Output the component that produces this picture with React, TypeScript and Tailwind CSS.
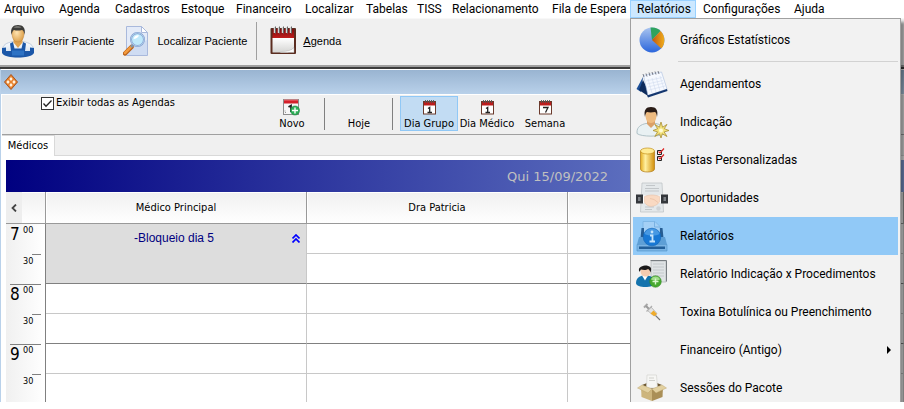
import type { ReactNode } from "react";

const UI = "font-[Roboto,'Open_Sans',sans-serif]";
const TAHOMA = "font-['DejaVu_Sans_Condensed','DejaVu_Sans',sans-serif]";
const ARIAL = "font-['Liberation_Sans',Arial,sans-serif]";

function PatientIcon() {
  return (
    <svg width="34" height="34" viewBox="0 0 34 34">
      <defs>
        <radialGradient id="skin" cx=".4" cy=".4" r=".7"><stop offset="0" stopColor="#ffe3b0" /><stop offset="1" stopColor="#d9983f" /></radialGradient>
        <linearGradient id="shirt" x1="0" y1="0" x2="0" y2="1"><stop offset="0" stopColor="#fff" /><stop offset="1" stopColor="#c3d5ea" /></linearGradient>
      </defs>
      <path d="M1.500 26C1.500 21 5 19 12 17.500h10c7 1.500 10.500 3.500 10.500 8.500v2c0 3-8 5-15.500 5S1.500 31 1.500 28z" fill="url(#shirt)" stroke="#9fb4cf" strokeWidth=".6" />
      <path d="M12.500 14h9v4.500L17 24l-4.500-5.500z" fill="#e0a351" />
      <path d="M1 24l4-.5V27h5l-1-7.500 3-1.500 1.500 6.500h7L22 18l3 1.500-1 7.500h5v-3.500l4 .5v5c-2 3.500-9 4.500-16 4.500S3 32.500 1 29z" fill="#1b57a8" />
      <path d="M11 26.500h12v5H11z" fill="#2d72c4" />
      <path d="M11 9.500c0-5 2-7 6-7s6 2 6 7c0 5-2.500 8.500-6 8.500s-6-3.500-6-8.500z" fill="url(#skin)" stroke="#b67a2f" strokeWidth=".4" />
      <path d="M10.500 11C9 4 12 1 17 1s8 3 6.500 10c-.5-3-1-4.500-2.500-5-3 .8-6 .6-8 0-1.500 1-2 2.500-2.500 5z" fill="#3c3c3a" />
      <path d="M12.500 3.500c2-2 6-2 8 0-2 .8-6 .8-8 0z" fill="#70706c" />
    </svg>
  );
}

function SearchDocIcon() {
  return (
    <svg width="27" height="32" viewBox="0 0 27 32">
      <path d="M3.500 1.500h15l6 6v23h-21z" fill="#e4ebf8" stroke="#a9b9dc" />
      <path d="M4 23l20-8v15H4z" fill="#cfdcf2" />
      <path d="M18.500 1.500v6h6z" fill="#fff" stroke="#a9b9dc" />
      <path d="M2 28.500l6.500-6.500" stroke="#b8611b" strokeWidth="4.500" strokeLinecap="round" />
      <path d="M2 28l6-6" stroke="#f39a3c" strokeWidth="2.500" strokeLinecap="round" />
      <path d="M8 22l3-3" stroke="#8595a6" strokeWidth="2.500" />
      <circle cx="14.500" cy="14.500" r="6.500" fill="#bfe9fb" stroke="#7c9fcf" strokeWidth="2" />
      <circle cx="14.500" cy="14.500" r="6.500" fill="none" stroke="#c6d8f0" strokeWidth=".7" />
      <path d="M10.500 14c.5-3 3-4.500 5.500-3.500-1 2-3 3.500-5.500 3.500z" fill="#fff" />
    </svg>
  );
}

function AgendaIcon() {
  return (
    <svg width="27" height="30" viewBox="0 0 27 30">
      <defs>
        <linearGradient id="page" x1="0" y1="0" x2="0" y2="1"><stop offset="0" stopColor="#fff" /><stop offset="1" stopColor="#d5d5d3" /></linearGradient>
        <linearGradient id="red" x1="0" y1="0" x2="0" y2="1"><stop offset="0" stopColor="#7a0d0d" /><stop offset="1" stopColor="#c81d1d" /></linearGradient>
      </defs>
      <rect x=".5" y="2" width="25.500" height="26" rx="1" fill="#5b2d20" />
      <rect x="2.500" y="3" width="21.500" height="10" fill="url(#red)" />
      <path d="M2.500 12H24v10l-6 4.500H2.500z" fill="url(#page)" />
      <path d="M12 25.500c5 0 9-1 12-4v5H10z" fill="#fafafa" stroke="#aaa" strokeWidth=".4" />
      {[4, 8, 12, 16, 20].map((x) => (
        <g key={x}><path d={`M${x + 0.5} 1v6`} stroke="#d5d5d5" strokeWidth="1.500" /><path d={`M${x + 1.5} .5v7`} stroke="#666" strokeWidth="1" /></g>
      ))}
    </svg>
  );
}

function AppIcon() {
  return (
    <svg width="14" height="16" viewBox="0 0 14 16">
      <path d="M7 .5L13.500 8 7 15.500.5 8z" fill="#e8812c" stroke="#a9541c" strokeWidth="1" />
      <path d="M7 3l1.700 2L7 7 5.300 5zM7 9l1.700 2L7 13l-1.700-2zM4 6l1.700 2L4 10 2.300 8zM10 6l1.700 2-1.700 2-1.700-2z" fill="#fff3e0" />
    </svg>
  );
}

function NewIcon() {
  return (
    <svg width="18" height="17" viewBox="0 0 18 17">
      <rect x=".5" y=".5" width="15" height="15" fill="#f7f7f7" stroke="#8d8d8d" />
      <rect x="1" y="1" width="14" height="3.500" fill="#d3202a" />
      <path d="M1 1h14" stroke="#f0777c" />
      <path d="M5.500 8L8 6.500V13" fill="none" stroke="#222" strokeWidth="1.800" />
      <path d="M2 13.500h1M2 11.500v1" stroke="#999" />
      <circle cx="12" cy="11.500" r="4.500" fill="#2fae58" stroke="#14813a" strokeWidth=".6" />
      <path d="M12 8.500v6M9 11.500h6" stroke="#fff" strokeWidth="1.400" />
    </svg>
  );
}

function DayIcon({ seven = false }: { seven?: boolean }) {
  return (
    <svg width="13" height="15" viewBox="0 0 13 15">
      <rect x=".5" y="1.500" width="12" height="12.500" fill="#fff" stroke="#6b3a2c" />
      <rect x="1" y="2" width="11" height="3.500" fill="#bb1c1c" />
      <path d="M2.500 0v3M4.500 0v3M6.500 0v3M8.500 0v3M10.500 0v3" stroke="#555" strokeWidth=".9" />
      {seven ? (
        <path d="M4 7.500h5L6.500 12.500" fill="none" stroke="#222" strokeWidth="1.300" />
      ) : (
        <path d="M5 8.500l1.700-1V12.500M4.500 12.500h4.500" fill="none" stroke="#222" strokeWidth="1.300" />
      )}
    </svg>
  );
}

function PieIcon() {
  return (
    <svg width="26" height="26" viewBox="0 0 26 26">
      <defs>
        <linearGradient id="blue" x1="0" y1="0" x2="0" y2="1"><stop offset="0" stopColor="#a9c4ef" /><stop offset="1" stopColor="#2b66dc" /></linearGradient>
        <linearGradient id="amber" x1="0" y1="0" x2="1" y2="0"><stop offset="0" stopColor="#c2570e" /><stop offset="1" stopColor="#f0ae1c" /></linearGradient>
      </defs>
      <circle cx="13" cy="13" r="12.500" fill="url(#blue)" />
      <path d="M13 13L11.500.6c4.500-.5 7.800 1 10 3.400z" fill="#2fa35e" />
      <path d="M13 13l8.500-9c5 5 5 12.500.8 17.500z" fill="url(#amber)" />
    </svg>
  );
}

function NotepadIcon() {
  return (
    <svg width="32" height="28" viewBox="0 0 32 28">
      <path d="M7 7L.5 19l4.500 3z" fill="#1d4f96" />
      <path d="M7 10l-4 10 9 6 1-4z" fill="#0c2a5c" />
      <path d="M7.500 5.500L25.500 2l5.500 17-19 6.500z" fill="#f6f9ff" stroke="#a9bddd" strokeWidth=".6" />
      <path d="M11 25.500l20-6.500.5 2L12 27.500z" fill="#14366f" />
      <path d="M10 11l16-3.500M11 14l16-3.500M12 17l16-4M13 20l16-4M12 9l4 14M16 8l4 14M20 7l4 14M24 6l4 13" stroke="#d5e0f1" strokeWidth=".7" />
      <path d="M8 7l-1-3M11 6.500l-1-3M14 6l-1-3.500M17 5l-1-3M20 4.500l-1-3M23 4l-1-3" stroke="#7b7f8c" strokeWidth="1" />
    </svg>
  );
}

function ReferralIcon() {
  return (
    <svg width="33" height="32" viewBox="0 0 33 32">
      <path d="M1 26c0-5 4-7.500 9-8.500h10c5 1 8 3.500 8 8v2c-3 3.500-23 3.500-27 0z" fill="#e9f1f3" stroke="#9fb5bb" strokeWidth=".8" />
      <path d="M11 14h8v4l-4 4-4-4z" fill="#dba067" />
      <path d="M9.500 9c0-5 2-7 5.500-7s5.500 2 5.500 7-2 8-5.500 8-5.500-3-5.500-8z" fill="#eebb80" />
      <path d="M9 11C7.500 4 10 1 15 1s7.500 3 6 10c-.4-3-1-4.500-2-5-3 .5-6 .5-8 0-1.300 1-1.600 2.500-2 5z" fill="#2a1c16" />
      <path d="M25 16l1.600 5.200 4.400-2.800-2.700 4.300L33 24.500l-4.800 1.400 2.800 4.600-4.700-2.700L25 32l-1.500-4.200-4.700 2.700 2.800-4.600-4.600-1.400 4.600-1.800-2.700-4.300 4.500 2.800z" fill="#f3e27c" stroke="#a98f35" strokeWidth=".8" />
      <circle cx="25" cy="24.500" r="2" fill="#fffbd6" />
    </svg>
  );
}

function DatabaseIcon() {
  return (
    <svg width="26" height="26" viewBox="0 0 26 26">
      <defs>
        <linearGradient id="gold" x1="0" y1="0" x2="1" y2="0"><stop offset="0" stopColor="#e5ad20" /><stop offset=".35" stopColor="#fff0a0" /><stop offset="1" stopColor="#d28f0a" /></linearGradient>
      </defs>
      <path d="M1.500 4v18c0 4 14 4 14 0V4z" fill="url(#gold)" stroke="#b07a12" strokeWidth=".7" />
      <ellipse cx="8.500" cy="4" rx="7" ry="3" fill="#ffeb94" stroke="#c4911b" strokeWidth=".7" />
      <path d="M18.500 3.500h4v4h-4zM18.500 9.500h4v4h-4z" fill="#fff" stroke="#222" />
      <path d="M19.500 4.500l1.500 1.500 4-4.500M19.500 10.500L21 12l4-4.500" fill="none" stroke="#dd2020" strokeWidth="1.200" />
    </svg>
  );
}

function HandshakeIcon() {
  return (
    <svg width="32" height="32" viewBox="0 0 32 32">
      <path d="M6 1h20l1.500 29h-23z" fill="#e4e8ea" stroke="#c0c5c8" strokeWidth=".8" />
      <path d="M10 3.500h9M9 6.500h14M9 9h14M9 25h9M9 27.500h7" stroke="#c2c6c9" strokeWidth="1" />
      <circle cx="22.500" cy="26.500" r="2.200" fill="#cfd3d6" />
      <path d="M6 13.500h4v7.500H6zM22 13.500h4v7.500h-4z" fill="#fcfcfc" />
      <path d="M0 12.500h7v9H0zM25 12.500h7v9h-7z" fill="#34373b" />
      <path d="M2 15h2.500v4H2zM27.500 15H30v4h-2.500z" fill="#7c8085" />
      <path d="M8.500 14.500c5-2 10-2 15 0v5.500c-3 4-8 5-10.500 4s-4.500-2.500-4.500-4z" fill="#f9d9c2" stroke="#e5b89c" strokeWidth=".5" />
      <path d="M14 16.500l4 1 4 3" fill="none" stroke="#e8bda1" strokeWidth=".7" />
    </svg>
  );
}

function PrinterInfoIcon() {
  return (
    <svg width="32" height="32" viewBox="0 0 32 32">
      <path d="M7 1.500h12l5 5V15H7z" fill="#a4d0f6" stroke="#7ab2e3" strokeWidth=".8" />
      <path d="M18.500 1.500v5.500H24" fill="none" stroke="#7ab2e3" />
      <path d="M5.500 8H8v9h16V8h2.500l1 10h-23z" fill="#265d94" />
      <path d="M3 17h26l2 7.500H1z" fill="#5e9fd6" />
      <path d="M1 24.500h30V31H1z" fill="#7bb4e4" stroke="#4f90c8" strokeWidth=".6" />
      <path d="M3 26.500h26v2.500H3z" fill="#235f99" />
      <circle cx="16" cy="17" r="8.800" fill="#1878d4" stroke="#1265b5" strokeWidth=".6" />
      <path d="M8.500 14c2-7 13-7 15 0-4 2-10 2-15 0z" fill="#4799e3" />
      <path d="M14 15.500h2.500v6M13.500 21.500h5.500" fill="none" stroke="#c5e4fb" strokeWidth="1.800" />
      <circle cx="16" cy="12" r="1.400" fill="#c5e4fb" />
    </svg>
  );
}

function ReportPersonIcon() {
  return (
    <svg width="32" height="28" viewBox="0 0 32 28">
      <path d="M15 1h15v21H15z" fill="#dfe3e5" stroke="#b5babd" strokeWidth=".8" />
      <path d="M17 4h11M17 7h11M17 10h11M17 13h11M17 16h11" stroke="#c3c8cb" />
      <path d="M14.500 .5H30.500v21" fill="none" stroke="#777d81" />
      <path d="M0 23c0-5 4-7 7-7.500h4c5 .5 8 3 8 7 0 6-19 6-19 .5z" fill="#1473ad" />
      <path d="M6 15.500l3 5 3-5z" fill="#fff" />
      <path d="M4.500 11c0-3 2-4.500 5-4.500s5 1.500 5 5c0 3-2 5-5 5s-5-2.500-5-5.500z" fill="#f4ccb0" />
      <path d="M3.500 12C1.500 8 5 6 9 5.500c5 0 7.500 2 5.500 7-.5-2-1.500-3-2.500-3.500-2 1.500-5 1-7 .5-.8 1-1 1.500-1.500 2.500z" fill="#1c1b1b" />
      <circle cx="19.500" cy="21.500" r="5.800" fill="#46a92f" stroke="#2f8220" strokeWidth=".5" />
      <path d="M15 19.500c1-4 8-4 9 0-3 1.500-6 1.500-9 0z" fill="#a1dd8b" />
      <path d="M19.500 18.500v6M16.500 21.500h6" stroke="#d9f7cf" strokeWidth="1.400" />
    </svg>
  );
}

function SyringeIcon() {
  return (
    <svg width="18" height="18" viewBox="0 0 18 18">
      <path d="M1 4.500L4.500 1" stroke="#a8a8a8" strokeWidth="2" />
      <path d="M3 3l3 3" stroke="#9a9a9a" strokeWidth="2" />
      <path d="M4.500 7.500L8 4l6 6.500-3 2.500z" fill="#e4e4e4" stroke="#a6a6a6" strokeWidth=".7" />
      <path d="M7.500 10.500L10.500 7.500 14 11l-2.500 2.200z" fill="#f0ac2b" />
      <path d="M3.500 8.500L9 3" stroke="#b0b0b0" strokeWidth="1.200" />
      <path d="M12.500 12.500l4.500 4.500" stroke="#777" strokeWidth="1.100" />
    </svg>
  );
}

function BoxIcon() {
  return (
    <svg width="30" height="28" viewBox="0 0 30 28">
      <path d="M5 11l10-4 10 4-10 4z" fill="#6c5731" />
      <path d="M10 1h9.500l1 13h-11z" fill="#f6f6f4" stroke="#d4d4d0" strokeWidth=".7" />
      <path d="M12 4h5M12 6.500h6" stroke="#d0d0cc" />
      <path d="M4 13l11 2.500V27L4.500 23z" fill="#cdb57d" />
      <path d="M26 13l-11 2.500V27l10.500-4z" fill="#aa8f57" />
      <path d="M5 11l10 4-4 4L.5 14zM25 11l-10 4 4 4 10.500-5z" fill="#e2d0a0" stroke="#b79c60" strokeWidth=".4" />
    </svg>
  );
}

const menuBar = ["Arquivo", "Agenda", "Cadastros", "Estoque", "Financeiro", "Localizar", "Tabelas", "TISS", "Relacionamento", "Fila de Espera", "Relatórios", "Configurações", "Ajuda"];

const reportItems: { label: string; icon: ReactNode; active?: boolean; sub?: boolean }[] = [
  { label: "Agendamentos", icon: <NotepadIcon /> },
  { label: "Indicação", icon: <ReferralIcon /> },
  { label: "Listas Personalizadas", icon: <DatabaseIcon /> },
  { label: "Oportunidades", icon: <HandshakeIcon /> },
  { label: "Relatórios", icon: <PrinterInfoIcon />, active: true },
  { label: "Relatório Indicação x Procedimentos", icon: <ReportPersonIcon /> },
  { label: "Toxina Botulínica ou Preenchimento", icon: <SyringeIcon /> },
  { label: "Financeiro (Antigo)", icon: null, sub: true },
  { label: "Sessões do Pacote", icon: <BoxIcon /> },
];

function MenuItem({ label, icon, active, sub }: { label: string; icon: ReactNode; active?: boolean; sub?: boolean }) {
  return (
    <button role="menuitem" className={`flex h-[38px] w-full items-center pr-[7px] text-left ${active ? "bg-[#91c9f7]" : ""}`}>
      <span className="flex w-[38px] shrink-0 justify-center">{icon}</span>
      <span className="flex-1 pl-[9px]">{label}</span>
      {sub && (
        <svg width="4" height="8" viewBox="0 0 4 8"><path d="M0 0l4 4-4 4z" fill="#000" /></svg>
      )}
    </button>
  );
}

function ReportsMenu() {
  return (
    <div role="menu" className="absolute top-[18px] left-0 z-10 w-[271px] border border-[#a0a0a0] bg-[#f2f2f2] p-[2px] shadow-[4px_4px_3px_rgba(0,0,0,0.45)]">
      <MenuItem label="Gráficos Estatísticos" icon={<PieIcon />} />
      <div className="h-[6px] pt-[2px] pl-[45px]"><div className="h-px bg-[#d2d2d2]" /></div>
      {reportItems.map((item) => <MenuItem key={item.label} {...item} />)}
    </div>
  );
}

function ViewButton({ label, icon, active }: { label: string; icon?: ReactNode; active?: boolean }) {
  return (
    <button className={`flex h-[35px] w-[58px] flex-col items-center border whitespace-nowrap ${active ? "border-[#90c8f6] bg-[#c2dcf3]" : "border-transparent"}`}>
      <span className="flex h-[20px] items-center">{icon}</span>
      <span className="leading-[13px]">{label}</span>
    </button>
  );
}

const slots = [
  { hour: "7", min: "00" }, { hour: "", min: "30" },
  { hour: "8", min: "00" }, { hour: "", min: "30" },
  { hour: "9", min: "00" }, { hour: "", min: "30" },
];

const headCell = "h-[32px] border-r border-b border-[#999] bg-linear-to-b from-[#f0f0f0] to-white p-0 text-center font-normal shadow-[inset_1px_1px_0_white]";

function Schedule() {
  return (
    <table className={`w-full table-fixed border-separate border-spacing-0 text-[11px] leading-[14px] ${TAHOMA}`}>
      <colgroup>
        <col className="w-[40px]" /><col className="w-[261px]" /><col className="w-[261px]" /><col className="w-[261px]" /><col />
      </colgroup>
      <thead>
        <tr>
          <th className={headCell}>
            <button aria-label="Anterior" className="flex h-[31px] w-[16px] items-center justify-center bg-[#eee]">
              <svg width="6" height="8" viewBox="0 0 6 8"><path d="M5 .5L1.500 4 5 7.500" fill="none" stroke="#444" strokeWidth="1.800" /></svg>
            </button>
          </th>
          <th className={headCell}>Médico Principal</th>
          <th className={headCell}>Dra Patricia</th>
          <th className={headCell} />
          <th className={headCell} />
        </tr>
      </thead>
      <tbody>
        {slots.map(({ hour, min }, i) => {
          const cell = `h-[30px] border-r border-b p-0 border-r-[#c8c8c8] ${hour ? "border-b-[#c8c8c8]" : "border-b-[#808080]"}`;
          return (
            <tr key={i}>
              <th className="h-[30px] border-r border-[#808080] bg-linear-to-r from-[#f0f0f0] to-white p-0 pr-[4px] pl-[4px] align-top font-normal">
                <div className={`flex h-[29px] ${hour && i > 0 ? "border-t border-[#808080]" : "pt-px"}`}>
                  <span className="w-[13px] text-left text-[17px] leading-[19px]">{hour}</span>
                  <span className={`w-[9px] text-left text-[9px] ${hour ? "leading-[11px]" : "leading-[13px]"}`}>{min}</span>
                  {!hour && <span className="-mt-px h-px w-[9px] bg-[#808080]" />}
                </div>
              </th>
              {i === 0 && (
                <td rowSpan={2} className={`border-r border-b border-r-[#c8c8c8] border-b-[#808080] bg-[#ddd] p-0 align-top text-[12px] text-[#000080] ${ARIAL}`}>
                  <div className="flex items-center pt-[7px] pr-[6px] pl-[10px]">
                    <span className="flex-1 text-center">-Bloqueio dia 5</span>
                    <svg width="8" height="9" viewBox="0 0 8 9"><path d="M.5 4.500L4 1l3.500 3.500M.5 8.500L4 5l3.500 3.500" fill="none" stroke="#00f" strokeWidth="1.700" /></svg>
                  </div>
                </td>
              )}
              {i > 1 && <td className={cell} />}
              <td className={cell} /><td className={cell} /><td className={cell} />
            </tr>
          );
        })}
      </tbody>
    </table>
  );
}

export default function App() {
  return (
    <div className={`h-screen bg-white pb-[7px] text-[12px] text-black ${UI}`}>
      <div className="relative flex h-full flex-col overflow-hidden">
        <nav className="grid h-[18px] shrink-0 grid-cols-[52px_56px_66px_55px_69px_61px_51px_35px_100px_85px_66px_91px_44px] bg-white pr-2">
          {menuBar.map((name) => (
            <div key={name} className={name === "Relatórios" ? "relative" : ""}>
              <button className={`block h-[18px] w-full text-left leading-[18px] whitespace-nowrap ${name === "Arquivo" ? "pl-[4px]" : "pl-[7px]"} ${name === "Relatórios" ? "bg-[#cce8ff] shadow-[inset_0_0_0_1px_#99d1ff]" : ""}`}>
                {name}
              </button>
              {name === "Relatórios" && <ReportsMenu />}
            </div>
          ))}
        </nav>

        <div className={`flex h-[47px] shrink-0 items-center border-t border-[#f8f8f8] bg-[#f0f0f0] pb-[2px] text-[11px] ${ARIAL}`}>
          <button className="flex items-center gap-[3px] pl-px whitespace-nowrap"><PatientIcon />Inserir Paciente</button>
          <button className="flex items-center gap-[7px] pl-[9px] whitespace-nowrap"><SearchDocIcon />Localizar Paciente</button>
          <span className="mr-[12px] ml-[9px] h-[38px] w-[2px] border-l border-[#a0a0a0]" />
          <button className="flex items-center gap-[6px] whitespace-nowrap"><AgendaIcon /><span><u>A</u>genda</span></button>
        </div>
        <div className="h-[4px] shrink-0 border-t-2 border-b-2 border-t-[#a0a0a0] border-b-[#3c3c3c]" />

        <div className="flex min-h-0 flex-1 flex-col border-l border-[#b9d1ea]">
          <div className="flex h-[25px] shrink-0 items-center border-t border-white bg-linear-to-b from-[#99b4d1] to-[#b9d1ea] pl-[3px]"><AppIcon /></div>
          <div className="flex min-h-0 flex-1 flex-col border-t border-l border-white">
            <div className={`flex h-[40px] shrink-0 items-start border-b border-[#a0a0a0] bg-[#f0f0f0] pt-px text-[11px] ${TAHOMA}`}>
              <label className="flex w-[261px] items-center gap-[2px] pl-[39px] leading-[14px] whitespace-nowrap">
                <span className="relative flex size-[13px]">
                  <input type="checkbox" defaultChecked className="size-[13px] appearance-none border border-[#333] bg-white" />
                  <svg className="pointer-events-none absolute inset-0" width="13" height="13" viewBox="0 0 13 13"><path d="M2.500 6.500L5 9.200l5.500-5.700" fill="none" stroke="#222" strokeWidth="1.300" /></svg>
                </span>
                Exibir todas as Agendas
              </label>
              <ViewButton label="Novo" icon={<NewIcon />} />
              <span className="mt-[2px] mr-[5px] ml-[3px] h-[32px] border-l border-[#808080]" />
              <ViewButton label="Hoje" />
              <span className="mt-[2px] mr-[7px] ml-[4px] h-[32px] border-l border-[#808080]" />
              <ViewButton label="Dia Grupo" icon={<DayIcon />} active />
              <ViewButton label="Dia Médico" icon={<DayIcon />} />
              <ViewButton label="Semana" icon={<DayIcon seven />} />
            </div>
            <div className={`flex h-[21px] shrink-0 bg-[#f0f0f0] text-[11px] ${TAHOMA}`}>
              <button className="w-[53px] border-t border-r border-[#d9d9d9] bg-white text-center leading-[18px]">Médicos</button>
              <div className="flex-1 border-b border-[#d9d9d9]" />
            </div>
            <div className="min-h-0 flex-1 bg-white pt-[4px] pl-[4px]">
              <div className="h-[32px] bg-linear-to-r/srgb from-[#000080] to-[#849ed9] pl-[501px] font-['DejaVu_Sans',Verdana,sans-serif] text-[13px] leading-[33px] text-[#c0c0c0]">
                Qui 15/09/2022
              </div>
              <Schedule />
            </div>
          </div>
        </div>
      </div>
    </div>
  );
}
